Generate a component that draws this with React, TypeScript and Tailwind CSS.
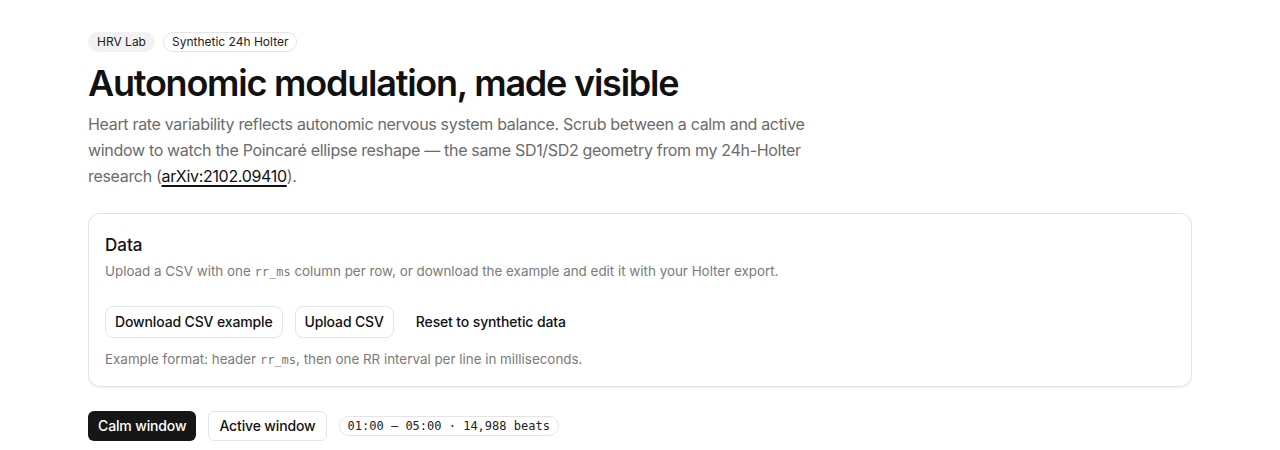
const sans = "font-['Inter',_'Liberation_Sans',_sans-serif]";
const mono = "font-['DejaVu_Sans_Mono',_'Liberation_Mono',_monospace]";

export default function App() {
  return (
    <div className={`min-h-[450px] bg-white text-[#111111] ${sans}`}>
      <div className="mx-auto max-w-[1104px] pt-8">
        {/* Tags */}
        <div className="flex items-center gap-2">
          <span className="rounded-full bg-[#f2f2f2] px-[9px] py-[3px] text-xs leading-[14px] text-[#222]">
            HRV Lab
          </span>
          <span className="rounded-full border border-[#e4e4e4] bg-white px-[8px] py-[2px] text-xs leading-[14px] text-[#222]">
            Synthetic 24h Holter
          </span>
        </div>

        {/* Heading */}
        <h1 className="mt-[11px] text-[36px] font-semibold leading-[40px] tracking-[-0.034em]">
          Autonomic modulation, made visible
        </h1>
        <p className="mt-2 max-w-3xl text-base leading-[26px] tracking-[-0.02em] text-[#6b6b6b]">
          Heart rate variability reflects autonomic nervous system balance. Scrub between a calm and active
          window to watch the Poincaré ellipse reshape — the same SD1/SD2 geometry from my 24h-Holter
          research (
          <a className="text-[#111] underline decoration-[1.5px] underline-offset-[3px]" href="#">
            arXiv:2102.09410
          </a>
          ).
        </p>

        {/* Data card */}
        <section className="mt-6 rounded-xl border border-[#e2e2e2] bg-white px-4 pb-[16px] pt-[19px] shadow-[0_1px_2px_rgba(0,0,0,0.06)]">
          <h2 className="text-[17px] font-medium leading-6">Data</h2>
          <p className="mt-[4px] text-[13.4px] leading-5 text-[#7a7a7a]">
            Upload a CSV with one <code className={`${mono} text-[12px]`}>rr_ms</code> column per row, or download
            the example and edit it with your Holter export.
          </p>
          <div className="mt-[24px] flex items-center gap-3">
            <button className="h-8 rounded-lg border border-[#e4e4e4] bg-white px-[9px] text-sm font-medium tracking-[-0.01em] text-[#111]">
              Download CSV example
            </button>
            <button className="h-8 rounded-lg border border-[#e4e4e4] bg-white px-[9px] text-sm font-medium tracking-[-0.01em] text-[#111]">
              Upload CSV
            </button>
            <button className="h-8 rounded-lg px-[10px] text-sm font-medium tracking-[-0.01em] text-[#111]">
              Reset to synthetic data
            </button>
          </div>
          <p className="mt-[11px] text-[13.4px] leading-5 text-[#7a7a7a]">
            Example format: header <code className={`${mono} text-[12px]`}>rr_ms</code>, then one RR interval per
            line in milliseconds.
          </p>
        </section>

        {/* Window switch */}
        <div className="mt-6 flex items-center gap-3">
          <button className="h-[30px] rounded-md bg-[#161616] px-[10px] text-sm font-medium tracking-[-0.01em] text-white">
            Calm window
          </button>
          <button className="h-[30px] rounded-md border border-[#e4e4e4] bg-white px-[10px] text-sm font-medium tracking-[-0.01em] text-[#111]">
            Active window
          </button>
          <span
            className={`rounded-full border border-[#e4e4e4] px-2 py-[1px] text-xs leading-[16px] text-[#222] ${mono}`}
          >
            01:00 — 05:00 · 14,988 beats
          </span>
        </div>
      </div>
    </div>
  );
}
